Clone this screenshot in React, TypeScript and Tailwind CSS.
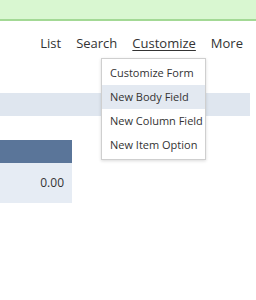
import React from 'react';

const menuItems = ['Customize Form', 'New Body Field', 'New Column Field', 'New Item Option'];

export default function App() {
  return (
    <div
      className="relative w-[256px] h-[300px] overflow-hidden bg-white text-[#333]"
      style={{ fontFamily: '"Open Sans", "Noto Sans", sans-serif' }}
    >
      {/* 顶部提示条 */}
      <div className="h-[21px] bg-[#d9f7d1] border-b-2 border-[#a3d995]" />

      {/* 导航 */}
      <nav className="flex justify-end gap-[15px] pr-[13px] pt-[12px] h-[35px] text-[13px] leading-[20px]">
        <a>List</a>
        <a>Search</a>
        <a className="underline underline-offset-2">Customize</a>
        <a>More</a>
      </nav>

      {/* 内容 */}
      <div className="pt-[37px]">
        <div className="w-[250px] h-[23px] bg-[#dfe6ef]" />
        <div className="mt-[24px] w-[72px]">
          <div className="h-[23px] bg-[#5a7599]" />
          <div className="h-[40px] bg-[#e6ecf4] flex items-center justify-end pr-[8px] text-[12px]">0.00</div>
        </div>
      </div>

      {/* 下拉菜单 */}
      <div className="absolute left-[101px] top-[58px] w-[105px] bg-white border border-[#cfcfcf] shadow-[0_1px_3px_rgba(0,0,0,0.15)] py-[2px]">
        {menuItems.map((item, i) => (
          <div
            key={item}
            className={`h-[24px] flex items-center pl-[8px] text-[11px] whitespace-nowrap ${i === 1 ? 'bg-[#e3e9f1]' : ''}`}
          >
            {item}
          </div>
        ))}
      </div>
    </div>
  );
}
